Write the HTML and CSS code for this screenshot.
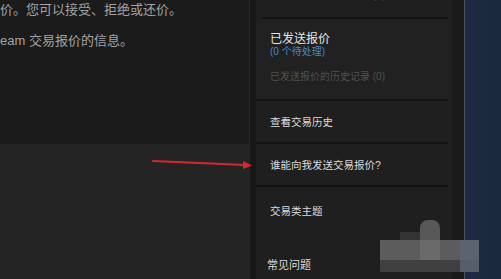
FILE: index.html
```html
<!DOCTYPE html>
<html lang="zh-CN">
<head>
<meta charset="utf-8">
<link rel="stylesheet" href="styles.css">
</head>
<body>
<div class="page">
  <div class="main">
    <div class="main-top">
      <p class="info">价。您可以接受、拒绝或还价。</p>
      <p class="info">eam 交易报价的信息。</p>
    </div>
    <div class="main-bottom"></div>
  </div>
  <div class="gutter"></div>
  <div class="sidebar">
    <div class="item item-cut">
      <span class="muted">已收到报价的历史记录 (0)</span>
    </div>
    <div class="item item-sent">
      <div class="title">已发送报价</div>
      <div class="pending">(0 个待处理)</div>
      <div class="muted history">已发送报价的历史记录 (0)</div>
    </div>
    <div class="item item-link"><span class="link">查看交易历史</span></div>
    <div class="item item-link"><span class="link">谁能向我发送交易报价?</span></div>
    <div class="item item-link item-plain"><span class="link">交易类主题</span></div>
    <div class="item item-link item-plain item-faq"><span class="link">常见问题</span></div>
  </div>
  <div class="gutter-right"></div>
  <div class="edge"></div>
  <div class="navy"></div>

  <svg class="arrow" width="110" height="14" viewBox="0 0 110 14">
    <line x1="2" y1="3" x2="94" y2="7" stroke="#d42a2e" stroke-width="2" stroke-linecap="round"/>
    <polygon points="92,3 101,7.5 92,11" fill="#d42a2e"/>
  </svg>

  <div class="wm">
    <div class="wm-a"></div>
    <div class="wm-b"></div>
    <div class="wm-c"></div>
    <div class="wm-d"></div>
    <div class="wm-e"></div>
    <div class="wm-f"></div>
  </div>
</div>
</body>
</html>
```

FILE: styles.css
```css
html, body {
  margin: 0;
  padding: 0;
}
body {
  width: 501px;
  height: 279px;
  overflow: hidden;
  background: #1c2a3f;
  font-family: "Liberation Sans", "Noto Sans CJK SC", sans-serif;
}
.page {
  position: relative;
  display: flex;
  width: 501px;
  height: 279px;
}
.main {
  width: 250px;
  display: flex;
  flex-direction: column;
  flex: none;
}
.main-top {
  height: 144px;
  background: #1b1b1b;
  border-right: 1px solid #262626;
  box-sizing: border-box;
  padding-top: 1px;
}
.info {
  margin: 0 0 13px 0;
  font-size: 13px;
  line-height: 18px;
  color: #a3a3a3;
  white-space: nowrap;
}
.main-bottom {
  flex: 1;
  background: #242424;
}
.gutter {
  width: 6px;
  flex: none;
  background: #171717;
}
.sidebar {
  width: 196px;
  flex: none;
  background: #1f1f1f;
  display: flex;
  flex-direction: column;
  padding: 0 4px 0 0;
  box-sizing: border-box;
  overflow: hidden;
}
.item {
  border-bottom: 2px solid #141414;
  padding-left: 14px;
  box-sizing: border-box;
  flex: none;
}
.item-cut {
  height: 19px;
  margin-left: 6px;
  padding-left: 8px;
  position: relative;
  overflow: hidden;
}
.item-cut .muted {
  position: absolute;
  left: 8px;
  top: -11px;
}
.muted {
  font-size: 10px;
  line-height: 14px;
  color: #505050;
  white-space: nowrap;
}
.item-sent {
  height: 82px;
  padding-top: 12px;
  background: #212121;
}
.title {
  font-size: 12px;
  line-height: 16px;
  color: #e6e6e6;
}
.pending {
  font-size: 10px;
  line-height: 14px;
  color: #4a86c8;
  margin-top: -2px;
}
.history {
  margin-top: 11px;
}
.item-link {
  height: 43px;
  display: flex;
  align-items: center;
}
.link {
  font-size: 10.5px;
  color: #dcdcdc;
  white-space: nowrap;
}
.item-plain {
  border-bottom: none;
  height: 46px;
}
.item-faq {
  margin-top: 8px;
  padding-left: 11px;
  font-size: 11px;
}
.item-faq .link {
  font-size: 11px;
}
.gutter-right {
  width: 12px;
  flex: none;
  background: #1a1a1a;
}
.edge {
  width: 1px;
  flex: none;
  background: #4a5263;
}
.navy {
  flex: 1;
  background: linear-gradient(90deg, #1f2b47 0%, #1c2a3f 40%, #1b293c 100%);
}
.arrow {
  position: absolute;
  left: 151px;
  top: 158px;
}
.wm {
  position: absolute;
  left: 380px;
  top: 220px;
  width: 100px;
  height: 55px;
}
.wm > div {
  position: absolute;
}
.wm-a {
  left: 40px;
  top: 0;
  width: 20px;
  height: 22px;
  background: #585858;
  border-radius: 8px 8px 0 0;
}
.wm-b {
  left: 20px;
  top: 12px;
  width: 20px;
  height: 8px;
  background: #343434;
}
.wm-c {
  left: 0;
  top: 20px;
  width: 99px;
  height: 20px;
  background: #5c5c5c;
}
.wm-d {
  left: 40px;
  top: 20px;
  width: 20px;
  height: 20px;
  background: #6a6a6a;
}
.wm-e {
  left: 0;
  top: 40px;
  width: 99px;
  height: 12px;
  background: #404040;
}
.wm-f {
  left: 80px;
  top: 20px;
  width: 19px;
  height: 32px;
  background: rgba(90, 100, 115, 0.85);
}
```
